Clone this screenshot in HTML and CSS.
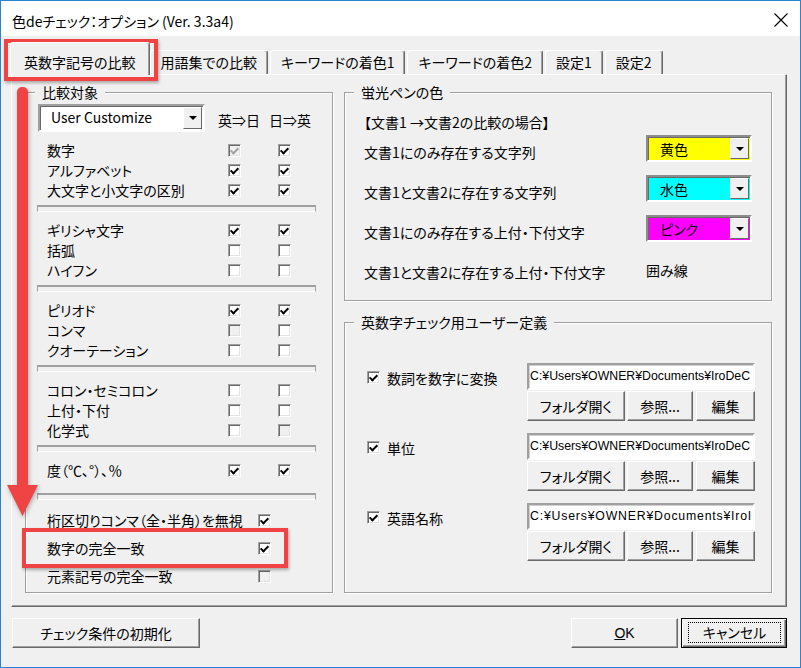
FILE: index.html
```html
<!DOCTYPE html>
<html lang="ja">
<head>
    <meta charset="UTF-8">
    <title>色deチェック：オプション</title>
    <link rel="stylesheet" href="styles.css">
</head>
<body>

<div class="window">
    <div class="titlebar">
        <span class="title">色deチェック：オプション (Ver. 3.3a4)</span>
        <svg class="close" width="14" height="14" viewBox="0 0 14 14"><path d="M0.5 0.5L13.5 13.5M13.5 0.5L0.5 13.5" stroke="#000" stroke-width="1.1"/></svg>
    </div>

    <div class="client">
        <div class="tabs">
            <div class="tab active">英数字記号の比較</div>
            <div class="tab">用語集での比較</div>
            <div class="tab">キーワードの着色1</div>
            <div class="tab">キーワードの着色2</div>
            <div class="tab">設定1</div>
            <div class="tab">設定2</div>
        </div>

        <div class="page">
            <!-- left: compare targets -->
            <div class="group compare">
                <div class="legend">比較対象</div>
                <div class="combo-row">
                    <div class="combo preset"><span class="combo-text">User Customize</span><span class="drop"></span></div>
                    <span class="col-head first">英⇒日</span>
                    <span class="col-head">日⇒英</span>
                </div>
                <div class="rows">
                    <div class="row"><span>数字</span><i class="cb on dis"></i><i class="cb on"></i></div>
                    <div class="row"><span>アルファベット</span><i class="cb on"></i><i class="cb on"></i></div>
                    <div class="row"><span>大文字と小文字の区別</span><i class="cb on"></i><i class="cb on"></i></div>
                </div>
                <div class="sep"></div>
                <div class="rows">
                    <div class="row"><span>ギリシャ文字</span><i class="cb on"></i><i class="cb on"></i></div>
                    <div class="row"><span>括弧</span><i class="cb"></i><i class="cb"></i></div>
                    <div class="row"><span>ハイフン</span><i class="cb"></i><i class="cb"></i></div>
                </div>
                <div class="sep"></div>
                <div class="rows">
                    <div class="row"><span>ピリオド</span><i class="cb on"></i><i class="cb on"></i></div>
                    <div class="row"><span>コンマ</span><i class="cb dis"></i><i class="cb"></i></div>
                    <div class="row"><span>クオーテーション</span><i class="cb"></i><i class="cb"></i></div>
                </div>
                <div class="sep"></div>
                <div class="rows">
                    <div class="row"><span>コロン・セミコロン</span><i class="cb"></i><i class="cb"></i></div>
                    <div class="row"><span>上付・下付</span><i class="cb"></i><i class="cb"></i></div>
                    <div class="row"><span>化学式</span><i class="cb"></i><i class="cb dis"></i></div>
                </div>
                <div class="sep"></div>
                <div class="rows">
                    <div class="row"><span>度（℃、°）、％</span><i class="cb on"></i><i class="cb on"></i></div>
                </div>
                <div class="sep wide"></div>
                <div class="rows opts">
                    <div class="row opt"><span>桁区切りコンマ（全・半角）を無視</span><i class="cb on"></i></div>
                    <div class="row opt"><span>数字の完全一致</span><i class="cb on"></i></div>
                    <div class="row opt"><span>元素記号の完全一致</span><i class="cb dis"></i></div>
                </div>
            </div>

            <div class="right-col">
                <!-- highlighter colours -->
                <div class="group pens">
                    <div class="legend">蛍光ペンの色</div>
                    <div class="pen-head">【文書1 →文書2の比較の場合】</div>
                    <div class="pen-row first">
                        <span class="pen-label">文書1にのみ存在する文字列</span>
                        <div class="combo color yellow"><span class="combo-text">黄色</span><span class="drop"></span></div>
                    </div>
                    <div class="pen-row">
                        <span class="pen-label">文書1と文書2に存在する文字列</span>
                        <div class="combo color cyan"><span class="combo-text">水色</span><span class="drop"></span></div>
                    </div>
                    <div class="pen-row">
                        <span class="pen-label">文書1にのみ存在する上付・下付文字</span>
                        <div class="combo color pink"><span class="combo-text">ピンク</span><span class="drop"></span></div>
                    </div>
                    <div class="pen-row">
                        <span class="pen-label">文書1と文書2に存在する上付・下付文字</span>
                        <span class="pen-value">囲み線</span>
                    </div>
                </div>

                <!-- user definitions -->
                <div class="group userdef">
                    <div class="legend">英数字チェック用ユーザー定義</div>
                    <div class="user-item first">
                        <label class="check"><i class="cb on"></i>数詞を数字に変換</label>
                        <div class="path">C:¥Users¥OWNER¥Documents¥IroDeC</div>
                        <div class="btns"><button class="btn folder">フォルダ開く</button><button class="btn browse">参照...</button><button class="btn edit">編集</button></div>
                    </div>
                    <div class="user-item">
                        <label class="check"><i class="cb on"></i>単位</label>
                        <div class="path">C:¥Users¥OWNER¥Documents¥IroDeC</div>
                        <div class="btns"><button class="btn folder">フォルダ開く</button><button class="btn browse">参照...</button><button class="btn edit">編集</button></div>
                    </div>
                    <div class="user-item">
                        <label class="check"><i class="cb on"></i>英語名称</label>
                        <div class="path spaced">C:¥Users¥OWNER¥Documents¥IroI</div>
                        <div class="btns"><button class="btn folder">フォルダ開く</button><button class="btn browse">参照...</button><button class="btn edit">編集</button></div>
                    </div>
                </div>
            </div>
        </div>

        <div class="footer">
            <button class="btn reset">チェック条件の初期化</button>
            <button class="btn ok"><u>O</u>K</button>
            <button class="btn cancel"><span class="focus">キャンセル</span></button>
        </div>
    </div>

    <!-- red annotations -->
    <div class="mark tab-mark"></div>
    <div class="mark row-mark"></div>
    <svg class="arrow" width="31" height="431" viewBox="0 0 31 431">
        <rect x="10" y="1" width="11" height="402" rx="5" fill="#f04444"/>
        <polygon points="0,399 31,399 15.5,430" fill="#f04444"/>
    </svg>
</div>

</body>
</html>
```

FILE: styles.css
```css
* {
    box-sizing: border-box;
}
body {
    margin: 0;
    font-family: "Noto Sans CJK JP", sans-serif;
    font-size: 14px;
    font-feature-settings: "palt";
    color: #000;
    background: #fff;
}
.window {
    position: relative;
    width: 801px;
    height: 668px;
    border: 1px solid #2a84d6;
    background: #f0f0f0;
    display: flex;
    flex-direction: column;
    overflow: hidden;
}
.titlebar {
    flex: none;
    height: 35px;
    background: #fff;
    display: flex;
    align-items: center;
    padding: 0 12px 0 11px;
}
.title {
    flex: 1;
    font-size: 14px;
    padding-top: 5px;
}
.close {
    margin-top: 3px;
}
.client {
    flex: 1;
    display: flex;
    flex-direction: column;
    padding: 0 13px 0 10px;
}

/* tabs */
.tabs {
    height: 38px;
    display: flex;
    align-items: flex-end;
}
.tab {
    height: 24px;
    padding: 0 10px;
    line-height: 22px;
    border: 1px solid;
    border-bottom: 0;
    border-color: #fff #696969 #fff #fff;
    box-shadow: inset -1px 0 #a0a0a0;
    border-radius: 3px 3px 0 0;
    margin-right: 2px;
    white-space: nowrap;
}
.tab.active {
    position: relative;
    z-index: 1;
    height: 33px;
    padding: 8px 13px 0;
    margin: 0 0 -1px -1px;
    background: #f0f0f0;
}

/* tab page */
.page {
    height: 533px;
    display: flex;
    gap: 11px;
    padding: 17px 14px 0 13px;
    border: 1px solid;
    border-color: #fff #696969 #696969 #fff;
    box-shadow: inset -1px -1px #a0a0a0;
}
.group {
    border: 1px solid #a0a0a0;
    box-shadow: inset 1px 1px #fff, 1px 1px #fff;
}
.legend {
    width: max-content;
    height: 20px;
    line-height: 20px;
    margin: -11px 0 0 9px;
    padding: 0 7px;
    background: #f0f0f0;
}
.compare {
    width: 308px;
    height: 501px;
}
.right-col {
    width: 428px;
    display: flex;
    flex-direction: column;
    gap: 21px;
}
.pens {
    height: 209px;
}
.userdef {
    height: 271px;
}

/* combo boxes */
.combo {
    display: flex;
    align-items: center;
    border: 2px solid;
    border-color: #a0a0a0 #fff #fff #a0a0a0;
    box-shadow: inset 1px 1px #696969;
    background: #fff;
}
.combo-text {
    flex: 1;
    white-space: nowrap;
}
.drop {
    align-self: stretch;
    width: 19px;
    margin: 1px 1px 1px 0;
    background: #f0f0f0;
    border: 1px solid;
    border-color: #fff #696969 #696969 #fff;
    display: flex;
    align-items: center;
    justify-content: center;
}
.drop::after {
    content: "";
    border-top: 4px solid #000;
    border-left: 4px solid transparent;
    border-right: 4px solid transparent;
}
.combo-row {
    display: flex;
    align-items: center;
    margin: 2px 0 0 12px;
    height: 28px;
}
.preset {
    width: 167px;
    height: 28px;
    padding-left: 11px;
}
.preset .combo-text {
    padding-bottom: 2px;
}
.col-head {
    margin-left: 9px;
    padding-top: 4px;
}
.col-head.first {
    margin-left: 13px;
}
.color {
    width: 106px;
    height: 27px;
    padding-left: 12px;
    border-color: #8c8c8c #fff #fff #8c8c8c;
}
.yellow { background: #ffff00; }
.cyan { background: #00ffff; }
.pink { background: #ff00ff; }

/* compare rows */
.rows {
    margin-top: 8px;
}
.row {
    display: grid;
    grid-template-columns: 181px 50px 13px;
    align-items: center;
    height: 20px;
    padding-left: 21px;
    white-space: nowrap;
}
.rows.opts {
    margin-top: 6px;
}
.row.opt {
    grid-template-columns: 211px 13px;
    height: 28px;
}
.sep {
    width: 279px;
    height: 7px;
    margin: 5px 0 0 11px;
    border: 1px solid;
    border-color: #a0a0a0 #a0a0a0 #fff #a0a0a0;
    box-shadow: inset 0 1px #a0a0a0;
}
.sep.wide {
    margin-top: 13px;
}

/* checkboxes */
.cb {
    position: relative;
    display: inline-block;
    width: 13px;
    height: 13px;
    border: 1px solid;
    border-color: #a0a0a0 #fff #fff #a0a0a0;
    box-shadow: inset 1px 1px #696969, inset -1px -1px #e3e3e3;
    background: #fff;
}
.cb.dis {
    background: #f0f0f0;
}
.cb.on::after {
    content: "";
    position: absolute;
    left: 3px;
    top: 1px;
    width: 3px;
    height: 6px;
    border: solid #000;
    border-width: 0 2px 2px 0;
    transform: rotate(45deg);
}
.cb.dis.on::after {
    border-color: #a0a0a0;
}

/* highlighter rows */
.pen-head {
    margin: 10px 0 0 19px;
    line-height: 20px;
}
.pen-row {
    display: flex;
    align-items: center;
    height: 27px;
    margin: 13px 0 0 19px;
    white-space: nowrap;
}
.pen-row.first {
    margin-top: 3px;
}
.pen-label {
    width: 282px;
    padding-top: 6px;
}
.pen-value {
    padding-top: 3px;
}

/* user definitions */
.user-item {
    display: grid;
    grid-template-columns: 182px 228px;
    grid-template-rows: 27px 30px;
    row-gap: 1px;
    margin-top: 12px;
}
.user-item.first {
    margin-top: 31px;
}
.check {
    display: flex;
    align-items: center;
    gap: 7px;
    padding: 2px 0 0 22px;
}
.path {
    background: #fff;
    border: 2px solid;
    border-color: #a0a0a0 #fff #fff #a0a0a0;
    box-shadow: inset 1px 1px #d0d0d0;
    font-family: "Liberation Sans", sans-serif;
    font-size: 12.3px;
    font-feature-settings: normal;
    line-height: 23px;
    padding-left: 1px;
    white-space: nowrap;
    overflow: hidden;
}
.path.spaced {
    letter-spacing: 0.8px;
}
.btns {
    grid-column: 2;
    display: flex;
}

/* buttons */
.btn {
    font: inherit;
    color: #000;
    background: #f0f0f0;
    border: 1px solid;
    border-color: #fff #696969 #696969 #fff;
    box-shadow: inset -1px -1px #a0a0a0;
    padding: 0;
    white-space: nowrap;
}
.btn.folder { width: 98px; }
.btn.browse { width: 66px; margin-left: 2px; }
.btn.edit { width: 59px; margin-left: 3px; }

.footer {
    display: flex;
    margin-top: 11px;
    height: 30px;
}
.footer .btn {
    height: 30px;
}
.reset {
    width: 188px;
    margin-left: 1px;
    margin-right: auto;
}
.ok {
    width: 107px;
    font-family: "Liberation Sans", sans-serif;
}
.cancel {
    width: 106px;
    margin-left: 3px;
    border: 1px solid #000;
    box-shadow: inset 1px 1px #fff, inset -1px -1px #696969, inset -2px -2px #a0a0a0;
    padding: 3px 5px 4px 6px;
}
.focus {
    display: block;
    height: 100%;
    border: 1px dotted #000;
    line-height: 19px;
}

/* annotations */
.mark {
    position: absolute;
    border: 4px solid #f04444;
    box-shadow: 1px 2px 3px rgba(0, 0, 0, 0.3);
}
.tab-mark {
    left: 3px;
    top: 38px;
    width: 154px;
    height: 42px;
}
.row-mark {
    left: 21px;
    top: 527px;
    width: 266px;
    height: 40px;
}
.arrow {
    position: absolute;
    left: 6px;
    top: 85px;
    filter: drop-shadow(1px 2px 2px rgba(0, 0, 0, 0.3));
}
```
